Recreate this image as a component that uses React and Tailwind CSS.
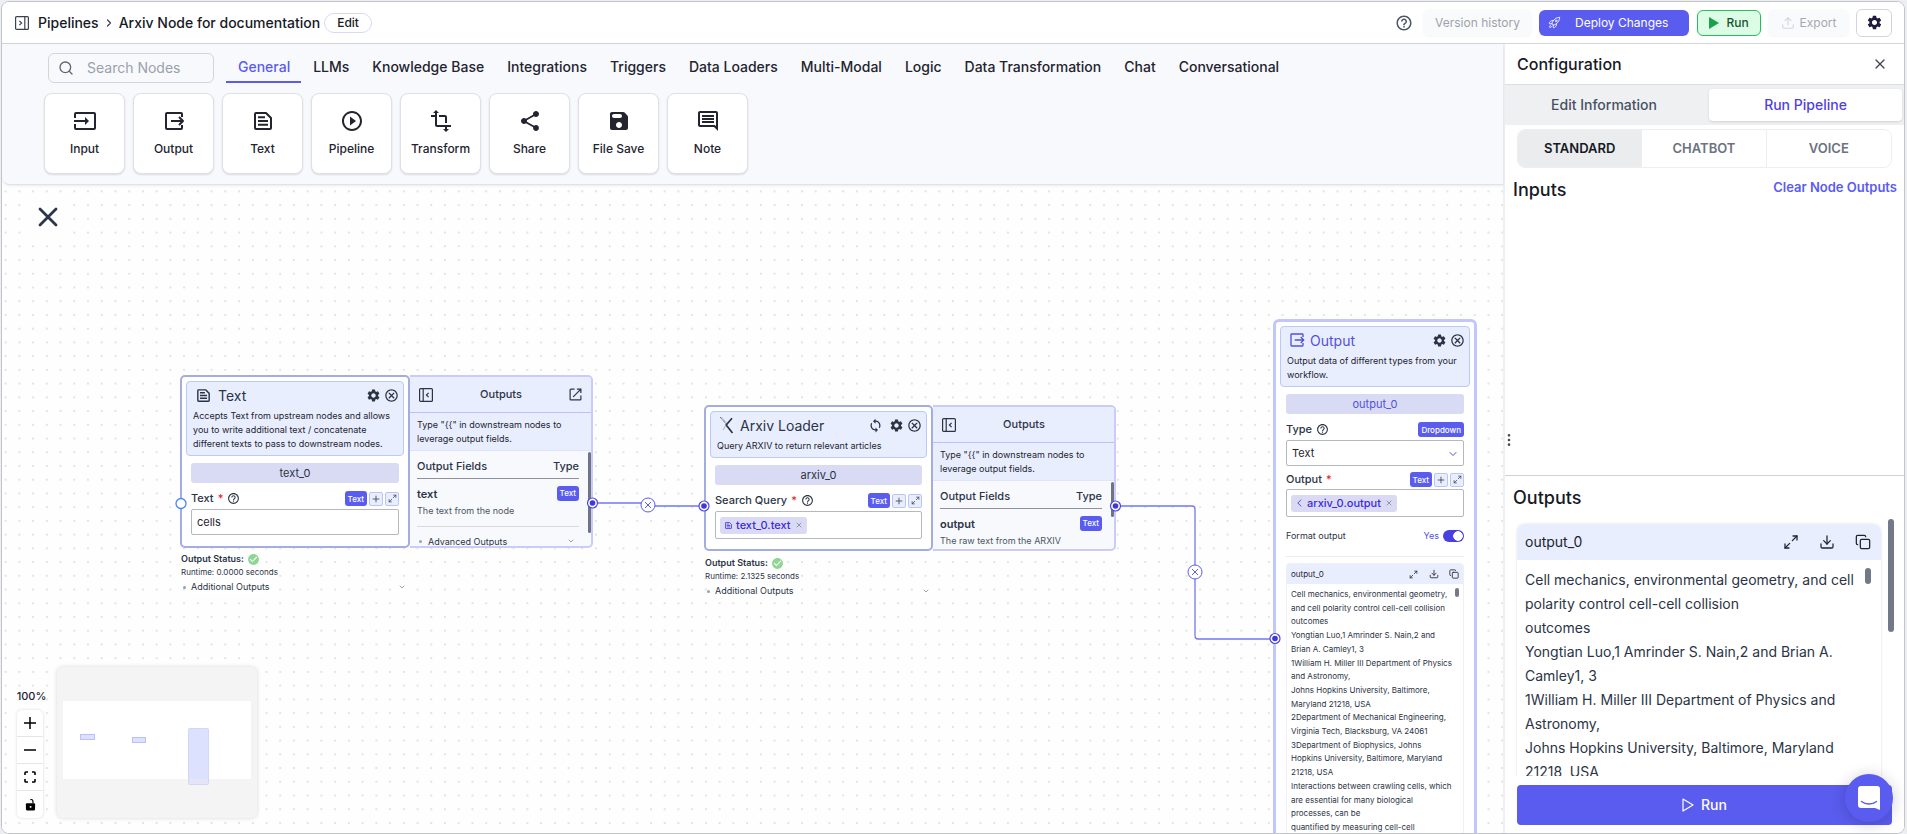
import React from "react";
import { Search, Maximize2, Download, Upload, Copy, X, ChevronDown, ChevronRight, Plus, MoreVertical } from "lucide-react";
import {
  MdSettings,
  MdHelpOutline,
  MdOutlineCancel,
  MdPlayCircleOutline,
  MdTransform,
  MdShare,
  MdOutlineComment,
  MdCheckCircle,
  MdSync,
} from "react-icons/md";
import { HiOutlineRocketLaunch } from "react-icons/hi2";

const InputIcon = ({ className }) => (
  <svg viewBox="0 0 24 24" className={className} fill="none" stroke="currentColor" strokeWidth="2" strokeLinejoin="round">
    <path d="M2 9V5a1 1 0 0 1 1-1h18a1 1 0 0 1 1 1v14a1 1 0 0 1-1 1H3a1 1 0 0 1-1-1v-4" />
    <path d="M1 12h12" />
    <path d="M12 8l4 4-4 4z" fill="currentColor" stroke="none" />
  </svg>
);

const OutputIcon = ({ className, thin }) => (
  <svg viewBox="0 0 24 24" className={className} fill="none" stroke="currentColor" strokeWidth={thin ? 1.8 : 2} strokeLinejoin="round">
    <path d="M20 8V5a1 1 0 0 0-1-1H5a1 1 0 0 0-1 1v14a1 1 0 0 0 1 1h14a1 1 0 0 0 1-1v-3" />
    <path d="M9 12h12M17 8l4 4-4 4" />
  </svg>
);

const TextIcon = ({ className }) => (
  <svg viewBox="0 0 24 24" className={className} fill="none" stroke="currentColor" strokeWidth="2" strokeLinejoin="round">
    <path d="M4 5a1 1 0 0 1 1-1h10l5 5v10a1 1 0 0 1-1 1H5a1 1 0 0 1-1-1z" />
    <path d="M7 8.2h7M7 12h10M7 15.8h10" />
  </svg>
);

const SaveIcon = ({ className }) => (
  <svg viewBox="0 0 24 24" className={className} fill="currentColor">
    <path d="M17.59 3.59c-.38-.38-.89-.59-1.42-.59H5c-1.11 0-2 .9-2 2v14c0 1.1.9 2 2 2h14c1.1 0 2-.9 2-2V7.83c0-.53-.21-1.04-.59-1.41l-2.82-2.83zM12 19c-1.66 0-3-1.34-3-3s1.34-3 3-3 3 1.34 3 3-1.34 3-3 3zm1-10H7c-1.1 0-2-.9-2-2s.9-2 2-2h6c1.1 0 2 .9 2 2s-.9 2-2 2z" />
  </svg>
);

const PanelIcon = ({ className, left }) => (
  <svg viewBox="0 0 14 14" className={className} fill="none" stroke="currentColor" strokeWidth="1.2">
    <rect x="0.6" y="0.6" width="12.8" height="12.8" rx="1" />
    {left ? <path d="M4.2 0.6v12.8M9.6 4.8L7.4 7l2.2 2.2" /> : <path d="M9.8 0.6v12.8M4.4 4.8L6.6 7 4.4 9.2" />}
  </svg>
);

const OpenIcon = ({ className }) => (
  <svg viewBox="0 0 14 14" className={className} fill="none" stroke="currentColor" strokeWidth="1.3">
    <path d="M6 1.2H2a.8.8 0 0 0-.8.8v10a.8.8 0 0 0 .8.8h10a.8.8 0 0 0 .8-.8V8M8.5 1.2h4.3v4.3M12.8 1.2L4.5 9.5" />
  </svg>
);

const ArxivIcon = ({ className }) => (
  <svg viewBox="0 0 16 18" className={className} fill="none" stroke="currentColor">
    <path d="M1 1l7 8" strokeWidth="0.8" strokeDasharray="1.2 0.6" />
    <path d="M2.5 1l6 7.5" strokeWidth="0.6" stroke="#8d95a8" />
    <path d="M13 2.2L7.2 9l6.3 8" strokeWidth="1.7" />
    <path d="M7 9l-3 5" strokeWidth="0.7" stroke="#8d95a8" />
  </svg>
);

const FitIcon = ({ className }) => (
  <svg viewBox="0 0 12 12" className={className} fill="none" stroke="currentColor" strokeWidth="1.6" strokeLinejoin="round">
    <path d="M1 4V1.8a.8.8 0 0 1 .8-.8H4M8 1h2.2a.8.8 0 0 1 .8.8V4M11 8v2.2a.8.8 0 0 1-.8.8H8M4 11H1.8a.8.8 0 0 1-.8-.8V8" />
  </svg>
);

const LockIcon = ({ className }) => (
  <svg viewBox="0 0 12 14" className={className}>
    <rect x="1" y="5.5" width="10" height="8" rx="1.2" fill="currentColor" />
    <path d="M8.7 5.5V3.6A2 2 0 0 0 5.8 1.8" fill="none" stroke="currentColor" strokeWidth="1.3" />
    <rect x="5.2" y="8.7" width="1.8" height="1.8" fill="#fff" />
  </svg>
);

const PALETTE = [
  ["Input", InputIcon],
  ["Output", OutputIcon],
  ["Text", TextIcon],
  ["Pipeline", MdPlayCircleOutline],
  ["Transform", MdTransform],
  ["Share", MdShare],
  ["File Save", SaveIcon],
  ["Note", MdOutlineComment],
];

const CATEGORIES = ["General", "LLMs", "Knowledge Base", "Integrations", "Triggers", "Data Loaders", "Multi-Modal", "Logic", "Data Transformation", "Chat", "Conversational"];

const NODE_LINES = [
  "Cell mechanics, environmental geometry,",
  "and cell polarity control cell-cell collision",
  "outcomes",
  "Yongtian Luo,1 Amrinder S. Nain,2 and",
  "Brian A. Camley1, 3",
  "1William H. Miller III Department of Physics",
  "and Astronomy,",
  "Johns Hopkins University, Baltimore,",
  "Maryland 21218, USA",
  "2Department of Mechanical Engineering,",
  "Virginia Tech, Blacksburg, VA 24061",
  "3Department of Biophysics, Johns",
  "Hopkins University, Baltimore, Maryland",
  "21218, USA",
  "Interactions between crawling cells, which",
  "are essential for many biological",
  "processes, can be",
  "quantified by measuring cell-cell",
];

const PANEL_PARAGRAPHS = [
  "Cell mechanics, environmental geometry, and cell polarity control cell-cell collision",
  "outcomes",
  "Yongtian Luo,1 Amrinder S. Nain,2 and Brian A. Camley1, 3",
  "1William H. Miller III Department of Physics and Astronomy,",
  "Johns Hopkins University, Baltimore, Maryland 21218, USA",
];

function Header() {
  return (
    <header className="flex h-[42px] shrink-0 items-center border-b border-[#d3d5db] bg-white pr-3 pl-[13px]">
      <button aria-label="Toggle sidebar" className="text-[#3b4252]">
        <PanelIcon className="size-[14px]" />
      </button>
      <nav className="ml-[9px] flex items-center text-sm font-medium text-[#161a26]">
        <a href="#pipelines">Pipelines</a>
        <ChevronRight className="mx-1 size-3 text-[#3b4252]" strokeWidth={2.5} />
        <span>Arxiv Node for documentation</span>
      </nav>
      <button className="ml-1 h-5 rounded-full border border-[#d9d8fb] px-3 text-xs font-medium text-[#161a26]">Edit</button>
      <div className="ml-auto flex items-center text-xs">
        <button aria-label="Help" className="mr-[10px] text-[#4b5563]">
          <MdHelpOutline className="size-[18px]" />
        </button>
        <button className="mr-[7px] h-[27px] w-[109px] rounded-md bg-[#f9fafb] text-[#9ea2ab] shadow-[0_1px_2px_rgba(0,0,0,0.04)]">Version history</button>
        <button className="mr-2 flex h-[26px] w-[150px] items-center rounded-md bg-[#5a5cf0] pl-[9px] text-white">
          <HiOutlineRocketLaunch className="mr-[14px] size-[13px]" />
          Deploy Changes
        </button>
        <button className="mr-[7px] flex h-[26px] w-16 items-center justify-center gap-[7px] rounded-md border border-[#22c05a] bg-[#dcfce5] font-medium text-[#17552f]">
          <svg viewBox="0 0 10 12" className="h-3 w-[10px]" fill="#16a34a"><path d="M0 0l10 6-10 6z" /></svg>
          Run
        </button>
        <button className="mr-[7px] flex h-[27px] w-[81px] items-center justify-center gap-[5px] rounded-md bg-[#f9fafb] text-[#a5a9b2] shadow-[0_1px_2px_rgba(0,0,0,0.04)]">
          <Upload className="size-[14px] text-[#d5d7dc]" />
          Export
        </button>
        <button aria-label="Settings" className="flex h-7 w-9 items-center justify-center rounded-md border border-[#d3d5db] bg-white text-[#1e1b3f]">
          <MdSettings className="size-[17px]" />
        </button>
      </div>
    </header>
  );
}

function Palette() {
  return (
    <section className="z-10 h-[141px] shrink-0 rounded-bl-lg border-b border-[#e0e2e6] bg-[#f8f9fc] shadow-[0_1px_3px_rgba(0,0,0,0.08)]">
      <div className="flex items-center pt-[9px] pl-[46px]">
        <label className="mr-3 flex h-[30px] w-[166px] items-center rounded-md border border-[#d3d5db] px-[9px]">
          <Search className="mr-[13px] size-4 shrink-0 text-[#5d6675]" />
          <input aria-label="Search Nodes" placeholder="Search Nodes" className="w-full min-w-0 bg-transparent text-sm outline-none placeholder:text-[#9aa1ae]" />
        </label>
        <nav className="flex text-sm font-medium whitespace-nowrap text-[#23242f]">
          {CATEGORIES.map((c, i) => (
            <button key={c} className={i === 0 ? "h-[30px] border-b-2 border-[#5a5cf0] pr-[11px] pl-3 text-[#5a5cf0]" : "h-[30px] border-b-2 border-transparent pr-[11px] pl-3"}>
              {c}
            </button>
          ))}
        </nav>
      </div>
      <div className="mt-[10px] ml-[42px] flex gap-2">
        {PALETTE.map(([name, Icon]) => (
          <button key={name} className="flex h-[81px] w-[81px] flex-col items-center rounded-lg border border-[#dfe1e5] bg-white pt-[15px] text-[#23242f] shadow-[0_1px_2px_rgba(0,0,0,0.12)]">
            <Icon className="size-6" />
            <span className="mt-2 text-xs font-medium whitespace-nowrap">{name}</span>
          </button>
        ))}
      </div>
    </section>
  );
}

const TypeBadge = ({ children }) => <span className="flex h-[15px] items-center rounded-[3px] bg-[#5a5cf0] px-[3px] text-[8px] font-medium text-white">{children}</span>;

const SmallButton = ({ label, children }) => (
  <button aria-label={label} className="flex size-[14px] items-center justify-center rounded-[2px] border border-[#b9c5f5] bg-[#e9eefe] text-[#3b4252]">
    {children}
  </button>
);

const FieldActions = () => (
  <span className="ml-auto flex items-center gap-[2px]">
    <TypeBadge>Text</TypeBadge>
    <SmallButton label="Add variable"><Plus className="size-[10px]" /></SmallButton>
    <SmallButton label="Expand field"><Maximize2 className="size-[9px]" /></SmallButton>
  </span>
);

const NodeHead = ({ icon, title, sync, description, accent }) => (
  <div className="rounded-[4px] border border-[#b9c9f8] bg-[#e9eefe] px-[6px] pt-[3px] pb-1">
    <div className="flex h-5 items-center">
      {icon}
      <h3 className={accent ? "text-[14px] text-[#5450dc]" : "text-[14px] text-[#2b3445]"}>{title}</h3>
      <div className="-mr-[2px] ml-auto flex items-center gap-[3px] text-[#2b3445]">
        {sync && <button aria-label="Refresh"><MdSync className="mr-[3px] size-[15px]" /></button>}
        <button aria-label="Node settings"><MdSettings className="size-[15px]" /></button>
        <button aria-label="Remove node"><MdOutlineCancel className="size-[15px]" /></button>
      </div>
    </div>
    <p className="mt-1 text-[9px] leading-[14px] text-[#23242f]">{description}</p>
  </div>
);

const NodeName = ({ children, accent }) => (
  <div className={accent ? "flex h-5 items-center justify-center rounded-[3px] bg-[#d9daf4] text-[11px] text-[#5450dc]" : "flex h-5 items-center justify-center rounded-[3px] bg-[#d9daf4] text-[11px] text-[#2b3445]"}>{children}</div>
);

const FieldLabel = ({ htmlFor, children, required, help }) => (
  <label htmlFor={htmlFor} className="flex items-center text-[11px] font-medium text-[#2b3445]">
    {children}
    {required && <span className="ml-1 text-[#e11d1d]">*</span>}
    {help && <MdHelpOutline className="ml-1 size-[13px]" />}
  </label>
);

const Token = ({ icon, children }) => (
  <span className="flex h-[17px] items-center rounded-[3px] bg-[#dadaf5] px-1 text-[11px] font-medium text-[#3a2be0]">
    {icon}
    {children}
    <X className="ml-1 size-2 text-[#6b7280]" />
  </span>
);

const OutputsPane = ({ open, field, text, children, thumb }) => (
  <div className="flex w-[183px] flex-col overflow-hidden rounded-r-[5px] border-2 border-l-0 border-[#c9ccfb] bg-[#f8f9fd]">
    <div className="flex h-9 shrink-0 items-center border-b border-[#b9c1f5] bg-[#e9eefe] px-[9px] text-[#2b3445]">
      <button aria-label="Collapse outputs"><PanelIcon left className="size-[14px]" /></button>
      <h4 className="grow text-center text-[11px] font-medium">Outputs</h4>
      {open ? <button aria-label="Open outputs"><OpenIcon className="size-[13px]" /></button> : <span className="w-[13px]" />}
    </div>
    <p className="h-[38px] shrink-0 border-b border-[#dfe4fb] bg-[#e9eefe] px-[7px] pt-[5px] text-[9px] leading-[14px] text-[#23242f]">
      {'Type "{{" in downstream nodes to leverage output fields.'}
    </p>
    <div className="flex min-h-0 grow overflow-hidden">
      <div className="min-w-0 grow pt-1 pr-[9px] pl-[7px]">
        <table className="w-full text-left text-[#2b3445]">
          <thead className="border-b border-[#8d919b]">
            <tr className="h-[23px] text-[11px]">
              <th className="p-0 font-medium">Output Fields</th>
              <th className="p-0 text-right font-medium">Type</th>
            </tr>
          </thead>
          <tbody className="border-b border-[#d8dae0]">
            <tr className="h-[48px] align-top">
              <td className="p-0 pt-[7px]">
                <div className="text-[11px] leading-[17px] font-semibold">{field}</div>
                <div className="text-[9px] leading-[16px] whitespace-nowrap text-[#4b5563]">{text}</div>
              </td>
              <td className="p-0 pt-[7px]"><div className="flex justify-end"><TypeBadge>Text</TypeBadge></div></td>
            </tr>
          </tbody>
        </table>
        {children}
      </div>
      <div className={thumb} />
    </div>
  </div>
);

const Status = ({ seconds }) => (
  <div className="w-[226px] pl-px text-[8px] text-[#2b3445]">
    <div className="flex h-[14px] items-center text-[9px] font-semibold">
      <span className="bg-white">Output Status:</span>
      <MdCheckCircle className="ml-[3px] size-[13px] text-[#8fd694]" />
    </div>
    <div className="h-3 leading-3"><span className="bg-white">Runtime: {seconds} seconds</span></div>
    <div className="mt-[2px] flex h-[14px] items-center text-[9px]">
      <span className="mx-[2px] size-[3px] rounded-full bg-[#9aa1ae]" />
      <span className="ml-[3px] bg-white">Additional Outputs</span>
      <ChevronDown className="ml-auto size-2 bg-white text-[#6b7280]" />
    </div>
  </div>
);

function TextNode() {
  return (
    <div className="absolute top-[190px] left-[178px]">
      <div className="flex h-[173px]">
        <div className="w-[230px] rounded-[5px] border-2 border-[#a3addf] bg-white p-1">
          <NodeHead
            icon={<TextIcon className="mr-[6px] ml-[2px] size-[17px] text-[#2b3445]" />}
            title="Text"
            description="Accepts Text from upstream nodes and allows you to write additional text / concatenate different texts to pass to downstream nodes."
          />
          <div className="mt-[7px] px-[5px]">
            <NodeName>text_0</NodeName>
            <div className="mt-2 mb-[3px] flex h-[15px] items-center">
              <FieldLabel htmlFor="text-field" required help>Text</FieldLabel>
              <FieldActions />
            </div>
            <input id="text-field" defaultValue="cells" className="block h-[26px] w-full rounded-[2px] border border-[#b5b8bf] px-[5px] text-[11px] text-[#23242f] outline-none" />
          </div>
        </div>
        <OutputsPane open field="text" text="The text from the node" thumb="mt-px h-[81px] w-[3px] shrink-0 rounded-full bg-[#6f7485]">
          <div className="mt-2 flex items-center text-[9px] text-[#2b3445]">
            <span className="mx-[2px] size-[3px] rounded-full bg-[#9aa1ae]" />
            <span className="ml-1">Advanced Outputs</span>
            <ChevronDown className="mr-1 ml-auto size-2 text-[#6b7280]" />
          </div>
        </OutputsPane>
      </div>
      <div className="mt-1"><Status seconds="0.0000" /></div>
    </div>
  );
}

function ArxivNode() {
  return (
    <div className="absolute top-[220px] left-[702px]">
      <div className="flex h-[146px]">
        <div className="w-[229px] rounded-[5px] border-2 border-[#a3addf] bg-white p-1">
          <NodeHead
            sync
            icon={<ArxivIcon className="mr-[5px] ml-[2px] h-[18px] w-4 text-[#2b3445]" />}
            title="Arxiv Loader"
            description="Query ARXIV to return relevant articles"
          />
          <div className="mt-[7px] px-[5px]">
            <NodeName>arxiv_0</NodeName>
            <div className="mt-2 mb-[3px] flex h-[15px] items-center">
              <FieldLabel required help>Search Query</FieldLabel>
              <FieldActions />
            </div>
            <div className="flex h-[28px] items-center rounded-[2px] border border-[#b5b8bf] px-1">
              <Token icon={<TextIcon className="mr-[3px] size-[9px]" />}>text_0.text</Token>
            </div>
          </div>
        </div>
        <OutputsPane field="output" text="The raw text from the ARXIV" thumb="mt-px h-[35px] w-[3px] shrink-0 rounded-full bg-[#6f7485]" />
      </div>
      <div className="mt-[5px]"><Status seconds="2.1325" /></div>
    </div>
  );
}

function OutputNode() {
  return (
    <div className="absolute top-[134px] left-[1271px] w-[204px] rounded-[6px] border-[3px] border-[#c3c6fb] bg-white p-1">
      <NodeHead accent icon={<OutputIcon thin className="mr-[4px] ml-px size-[18px] text-[#5450dc]" />} title="Output" description="Output data of different types from your workflow." />
      <div className="mt-[7px] px-[6px]">
        <NodeName accent>output_0</NodeName>
        <div className="mt-2 mb-[3px] flex h-[15px] items-center">
          <FieldLabel htmlFor="type-field" help>Type</FieldLabel>
          <span className="ml-auto"><TypeBadge>Dropdown</TypeBadge></span>
        </div>
        <div className="relative">
          <select id="type-field" className="block h-[26px] w-full appearance-none rounded-[2px] border border-[#b5b8bf] bg-white px-[5px] text-[11px] text-[#23242f] outline-none">
            <option>Text</option>
          </select>
          <ChevronDown className="pointer-events-none absolute top-2 right-[5px] size-3 text-[#5450dc]" />
        </div>
        <div className="mt-[6px] mb-[2px] flex h-[15px] items-center">
          <FieldLabel required>Output</FieldLabel>
          <FieldActions />
        </div>
        <div className="flex h-[28px] items-center rounded-[2px] border border-[#b5b8bf] px-1">
          <Token icon={<svg viewBox="0 0 6 9" className="mr-[5px] ml-[2px] h-2 w-[5px]" fill="none" stroke="currentColor"><path d="M5 .5l-4 4 4 4" /></svg>}>arxiv_0.output</Token>
        </div>
        <div className="mt-[13px] flex h-3 items-center text-[9px]">
          <label htmlFor="format-output" className="text-[#2b3445]">Format output</label>
          <span className="mr-1 ml-auto text-[#5450dc]">Yes</span>
          <input id="format-output" type="checkbox" role="switch" defaultChecked className="h-3 w-[21px] appearance-none rounded-full bg-[#4a3fe0] bg-[radial-gradient(circle_at_15px_6px,#fff_4.5px,transparent_5px)]" />
        </div>
        <hr className="mt-[14px] border-[#ececf0]" />
        <div className="mt-[6px] rounded-t-[4px] border border-[#eef0f5]">
          <div className="flex h-[20px] items-center gap-[9px] bg-[#e9eefe] px-1 text-[8px] text-[#23242f]">
            <span className="grow">output_0</span>
            <button aria-label="Expand output"><Maximize2 className="size-[9px]" /></button>
            <button aria-label="Download output" className="ml-[2px]"><Download className="size-[10px]" /></button>
            <button aria-label="Copy output" className="ml-px"><Copy className="size-[10px]" /></button>
          </div>
          <div className="flex">
            <div className="mt-1 flex h-[246px] grow flex-col justify-between pl-1 text-[8px] leading-[13px] whitespace-nowrap text-[#2b3445]">
              {NODE_LINES.map((l) => <p key={l}>{l}</p>)}
            </div>
            <div className="mt-1 mr-1 -ml-3 h-[9px] w-1 shrink-0 rounded-full bg-[#74798a]" />
          </div>
        </div>
      </div>
    </div>
  );
}

function Edges() {
  return (
    <svg className="pointer-events-none absolute inset-0 size-full" fill="none">
      <path d="M591 318H640q6 0 6 1.5 0 1.5 6 1.5H702" stroke="#7477f3" strokeWidth="1.3" />
      <path d="M1114 321H1190q3 0 3 3V451q0 3 3 3H1272" stroke="#7477f3" strokeWidth="1.3" />
      {[[646, 320], [1193, 387]].map(([x, y]) => (
        <g key={x} stroke="#5a5cf0">
          <circle cx={x} cy={y} r="7" fill="#fff" />
          <path d={`M${x - 3} ${y - 3}l6 6m0-6l-6 6`} />
        </g>
      ))}
      <circle cx="179" cy="318.5" r="5" fill="#fff" stroke="#4a86f0" strokeWidth="1.3" />
      {[[590.5, 318], [702, 321], [1113.5, 321], [1273, 453.5]].map(([x, y]) => (
        <g key={x}>
          <circle cx={x} cy={y} r="5" fill="#fff" stroke="#4f46e5" strokeWidth="1.2" />
          <circle cx={x} cy={y} r="2.8" fill="#3f36dd" />
        </g>
      ))}
    </svg>
  );
}

function Canvas() {
  return (
    <section className="relative min-h-0 grow overflow-hidden bg-[#fefefe]">
      <svg className="absolute inset-0 size-full">
        <defs>
          <pattern id="dots" x="-3.2" y="-0.5" width="13.73" height="13.73" patternUnits="userSpaceOnUse">
            <circle cx="6.86" cy="6.86" r="0.7" fill="#b4b6be" />
          </pattern>
        </defs>
        <rect width="100%" height="100%" fill="url(#dots)" />
      </svg>
      <button aria-label="Close editor" className="absolute top-[14px] left-[28px] flex size-9 items-center justify-center rounded bg-[#fefefe] text-[#2b3648]">
        <svg viewBox="0 0 20 20" className="size-5" fill="none" stroke="currentColor" strokeWidth="2.8" strokeLinecap="round"><path d="M2 2l16 16M18 2L2 18" /></svg>
      </button>
      <TextNode />
      <ArxivNode />
      <OutputNode />
      <Edges />
      <div className="absolute bottom-[15px] left-[15px] flex items-end gap-[14px]">
        <div className="flex w-[26px] flex-col items-center">
          <span className="mb-[7px] pl-[3px] text-[11px] leading-[14px] font-medium text-[#23242f]">100%</span>
          <div className="flex w-full flex-col divide-y divide-[#e5e6ea] rounded-[5px] bg-white text-black shadow-[0_0_3px_rgba(0,0,0,0.16)]">
            <button aria-label="Zoom in" className="flex h-[27px] items-center justify-center"><svg viewBox="0 0 12 12" className="size-3" stroke="currentColor" strokeWidth="1.5"><path d="M0 6h12M6 0v12" /></svg></button>
            <button aria-label="Zoom out" className="flex h-[27px] items-center justify-center"><svg viewBox="0 0 12 12" className="size-3" stroke="currentColor" strokeWidth="1.5"><path d="M0 6h12" /></svg></button>
            <button aria-label="Fit view" className="flex h-[27px] items-center justify-center"><FitIcon className="size-3" /></button>
            <button aria-label="Toggle lock" className="flex h-[27px] items-center justify-center"><LockIcon className="h-[13px] w-[11px]" /></button>
          </div>
        </div>
        <div className="overflow-hidden rounded-md bg-[#f4f4f4] shadow-[0_0_4px_rgba(0,0,0,0.16)]">
          <svg width="200" height="151" viewBox="0 0 200 151">
            <rect x="6" y="34" width="188" height="78" fill="#fff" />
            <g fill="#dce1fd" stroke="#bcc0fa">
              <rect x="23.5" y="67.5" width="14" height="5" />
              <rect x="75.500" y="70.5" width="13" height="5" />
            </g>
            <rect x="131.5" y="61.5" width="20" height="56" rx="1" fill="#dce1fd" stroke="#d3d6fb" />
            <rect x="132" y="112" width="19" height="5" fill="#e3e5f4" />
          </svg>
        </div>
      </div>
    </section>
  );
}

function ConfigPanel() {
  return (
    <aside className="flex w-[401px] shrink-0 flex-col border-l-2 border-[#eeeef4] bg-white">
      <div className="flex h-[41px] shrink-0 items-center border-b border-[#dcdee2] pr-4 pl-3">
        <h2 className="text-base font-medium text-[#161a26]">Configuration</h2>
        <button aria-label="Close configuration" className="ml-auto text-[#3b4252]"><X className="size-4" strokeWidth={1.8} /></button>
      </div>
      <div role="tablist" className="flex h-10 shrink-0 justify-between bg-[#eff0f2] py-1 pr-[2px] text-sm font-medium">
        <button role="tab" aria-selected="false" className="w-[198px] text-[#475063]">Edit Information</button>
        <button role="tab" aria-selected="true" className="w-[193px] rounded bg-white text-[#4f3fe0] shadow-sm">Run Pipeline</button>
      </div>
      <div className="mx-3 mt-1 grid h-[39px] shrink-0 grid-cols-3 divide-x divide-[#eceef0] overflow-hidden rounded-lg border border-[#eceef0] text-[13px] font-semibold text-[#6b7280]">
        <button className="bg-[#ebecee] text-[#161a26]">STANDARD</button>
        <button>CHATBOT</button>
        <button>VOICE</button>
      </div>
      <div className="flex h-[308px] shrink-0 flex-col border-b border-[#cfd1d6]">
        <div className="flex items-center justify-between pt-2 pr-[7px] pl-2">
          <h3 className="text-lg font-medium text-[#161a26]">Inputs</h3>
          <button className="-mt-[5px] text-[13px] font-semibold text-[#5a5cf0]">Clear Node Outputs</button>
        </div>
        <MoreVertical className="mt-auto mb-[27px] -ml-1 size-4 text-[#4b4b4b]" />
      </div>
      <h3 className="mt-2 shrink-0 pl-2 text-lg font-medium text-[#161a26]">Outputs</h3>
      <div className="flex min-h-0 grow overflow-hidden pt-[7px] pr-[10px] pl-3">
        <div className="mt-[5px] min-w-0 grow">
          <div className="rounded-t-lg shadow-[0_0_3px_rgba(0,0,0,0.12)]">
            <div className="flex h-9 items-center rounded-t-lg bg-[#e9eefe] pr-[10px] pl-2 text-[#23242f]">
              <span className="grow text-sm">output_0</span>
              <button aria-label="Expand output"><Maximize2 className="size-4" strokeWidth={1.9} /></button>
              <button aria-label="Download output" className="ml-5"><Download className="size-4" strokeWidth={1.9} /></button>
              <button aria-label="Copy output" className="ml-5"><Copy className="size-4" strokeWidth={1.9} /></button>
            </div>
            <div className="flex bg-white pr-[10px] pl-2">
              <div className="min-w-0 grow pt-2 text-sm leading-6 text-[#2b3445]">
                {PANEL_PARAGRAPHS.map((p) => <p key={p}>{p}</p>)}
              </div>
              <div className="mt-2 h-4 w-[6px] shrink-0 rounded-full bg-[#74798a]" />
            </div>
          </div>
        </div>
        <div className="ml-[7px] h-[113px] w-[6px] shrink-0 rounded-full bg-[#74798a]" />
      </div>
      <div className="shrink-0 px-3 pt-[9px] pb-2">
        <button className="flex h-10 w-full items-center justify-center gap-[7px] rounded bg-[#5a5cf0] text-sm font-medium text-white">
          <svg viewBox="0 0 12 14" className="h-[14px] w-3" fill="none" stroke="currentColor" strokeWidth="1.2" strokeLinejoin="round"><path d="M1 1l10 6-10 6z" /></svg>
          Run
        </button>
      </div>
    </aside>
  );
}

export default function App() {
  return (
    <div className="h-screen bg-[#eceef1] pt-px pr-[2px] pl-px font-['Inter','Liberation_Sans',sans-serif]">
      <div className="relative flex h-full flex-col overflow-hidden rounded-lg border border-[#c3c5ce] bg-white">
        <Header />
        <main className="flex min-h-0 grow">
          <div className="flex min-w-0 grow flex-col">
            <Palette />
            <Canvas />
          </div>
          <ConfigPanel />
        </main>
        <button aria-label="Open chat" className="absolute right-[11px] bottom-[11px] flex size-12 items-center justify-center rounded-full bg-[#5a5cf0] shadow-[0_2px_16px_rgba(0,0,0,0.2)]">
          <svg viewBox="0 0 22 24" className="h-6 w-[22px]">
            <path d="M3 0h16a3 3 0 0 1 3 3v21l-5-2H3a3 3 0 0 1-3-3V3a3 3 0 0 1 3-3z" fill="#fff" />
            <path d="M3.5 15.500c4 3.300 11 3.300 15 0" fill="none" stroke="#5a5cf0" strokeWidth="1.3" strokeLinecap="round" />
          </svg>
        </button>
      </div>
    </div>
  );
}
